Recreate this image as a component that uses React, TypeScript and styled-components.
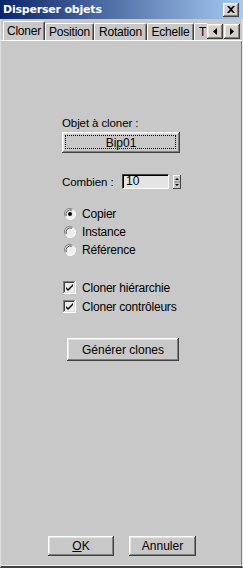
import React, { useState } from "react";
import styled, { createGlobalStyle } from "styled-components";

const GlobalStyle = createGlobalStyle`
   html, body {
      margin: 0;
      padding: 0;
      background: #c8c8c8;
   }
   body {
      font-family: "Liberation Sans", Arial, sans-serif;
      font-size: 11px;
      color: #000;
   }
`;

const bevelOut = `
   box-shadow: inset -1px -1px #404040, inset 1px 1px #ffffff, inset -2px -2px #808080, inset 2px 2px #e4e4e4;
`;

const Window = styled.div`
   width: 243px;
   height: 568px;
   box-sizing: border-box;
   display: flex;
   flex-direction: column;
   background: #c8c8c8;
   border-left: 1px solid #dedede;
   border-right: 1px solid #e6e6e6;
   border-bottom: 2px solid #404040;
`;

const TitleBar = styled.div`
   height: 19px;
   margin-left: -1px;
   margin-right: -1px;
   flex-shrink: 0;
   display: flex;
   align-items: center;
   justify-content: space-between;
   padding: 0 4px 0 3px;
   background: linear-gradient(to right, #0a246a, #a6caf0);
`;

const Title = styled.span`
   color: #fff;
   font-family: "DejaVu Sans", "Liberation Sans", sans-serif;
   font-weight: bold;
   font-size: 11px;
   letter-spacing: -0.2px;
`;

const CloseButton = styled.div`
   width: 16px;
   height: 14px;
   background: #d4d0c8;
   ${bevelOut}
   display: flex;
   align-items: center;
   justify-content: center;
`;

const TabArea = styled.div`
   position: relative;
   margin-top: 2px;
   flex-shrink: 0;
`;

const TabStrip = styled.div`
   height: 19px;
   display: flex;
   align-items: flex-end;
   padding-left: 2px;
   border-bottom: 1px solid #ffffff;
   overflow: hidden;
`;

const Tab = styled.div<{ $active?: boolean; $w: number; $cut?: boolean }>`
   position: relative;
   z-index: ${(p) => (p.$active ? 2 : 1)};
   box-sizing: border-box;
   width: ${(p) => p.$w}px;
   height: ${(p) => (p.$active ? 20 : 17)}px;
   margin-bottom: ${(p) => (p.$active ? -1 : 0)}px;
   flex-shrink: 0;
   display: flex;
   align-items: center;
   justify-content: ${(p) => (p.$cut ? "flex-start" : "center")};
   padding-left: ${(p) => (p.$cut ? 4 : 0)}px;
   padding-bottom: ${(p) => (p.$active ? 2 : 0)}px;
   background: #c8c8c8;
   border-top: 1px solid #ffffff;
   border-left: 1px solid #ffffff;
   border-right: ${(p) => (p.$cut ? "none" : "1px solid #404040")};
   border-top-left-radius: 2px;
   border-top-right-radius: 2px;
   box-shadow: ${(p) => (p.$cut ? "none" : "inset -1px 0 #808080")};
   font-size: 12px;
   letter-spacing: -0.2px;
`;

const Scroller = styled.div`
   position: absolute;
   right: 2px;
   top: 3px;
   display: flex;
   gap: 1px;
   z-index: 3;
`;

const ArrowButton = styled.div`
   width: 16px;
   height: 15px;
   background: #d4d0c8;
   ${bevelOut}
   display: flex;
   align-items: center;
   justify-content: center;
`;

const Panel = styled.div`
   flex: 1;
   display: flex;
   flex-direction: column;
   border-right: 1px solid #808080;
   border-bottom: 1px solid #f0f0f0;
   padding: 76px 0 9px 61px;
`;

const Label = styled.div`
   line-height: 13px;
   font-size: 11.5px;
   letter-spacing: -0.1px;
`;

const Button = styled.div<{ $w: number; $h: number; $focus?: boolean }>`
   box-sizing: border-box;
   width: ${(p) => p.$w}px;
   height: ${(p) => p.$h}px;
   display: flex;
   align-items: center;
   justify-content: center;
   background: #c8c8c8;
   ${bevelOut}
   font-size: 12px;
   position: relative;
   &::after {
      content: "";
      display: ${(p) => (p.$focus ? "block" : "none")};
      position: absolute;
      inset: 3px 4px 4px 3px;
      border: 1px dotted #000;
   }
`;

const Field = styled.div`
   margin-top: 2px;
`;

const SpinRow = styled.div`
   display: flex;
   align-items: center;
   margin-top: 21px;
   height: 15px;
   font-size: 11.5px;
`;

const SpinLabel = styled.span`
   width: 60px;
   letter-spacing: -0.1px;
`;

const SpinInput = styled.div`
   box-sizing: border-box;
   width: 47px;
   height: 15px;
   background: #e4e4e4;
   border-top: 1px solid #404040;
   border-left: 1px solid #404040;
   border-right: 1px solid #ffffff;
   border-bottom: 1px solid #ffffff;
   box-shadow: inset 1px 1px #000;
   padding-left: 3px;
   font-size: 12px;
   line-height: 13px;
`;

const SpinButtons = styled.div`
   margin-left: 4px;
   width: 8px;
   height: 14px;
   display: flex;
   flex-direction: column;
   background: #c8c8c8;
   box-shadow: inset -1px -1px #404040, inset 1px 1px #ffffff;
`;

const Group = styled.div<{ $top: number; $row: number }>`
   margin-top: ${(p) => p.$top}px;
   display: flex;
   flex-direction: column;
   & > * {
      height: ${(p) => p.$row}px;
   }
`;

const Option = styled.div`
   display: flex;
   align-items: center;
   gap: 6px;
   font-size: 12px;
   letter-spacing: -0.2px;
`;

const GenerateButton = styled(Button)`
   margin-top: 22px;
   margin-left: 5px;
`;

const Footer = styled.div`
   margin-top: auto;
   margin-left: -14px;
   display: flex;
   gap: 15px;
`;

function Radio({ checked }: { checked?: boolean }) {
   return (
      <svg width="12" height="12" viewBox="0 0 12 12" style={{ marginLeft: 2 }}>
         <circle cx="6" cy="6" r="5.5" fill="#ededed" />
         <path d="M1.2 8.5 A5.3 5.3 0 0 1 8.5 1.2" stroke="#808080" strokeWidth="1" fill="none" />
         <path d="M2.3 7.8 A4.2 4.2 0 0 1 7.8 2.3" stroke="#505050" strokeWidth="1" fill="none" />
         <path d="M3.5 10.8 A5.3 5.3 0 0 0 10.8 3.5" stroke="#ffffff" strokeWidth="1" fill="none" />
         {checked && <circle cx="6" cy="6" r="2" fill="#000" />}
      </svg>
   );
}

function Check() {
   return (
      <svg width="13" height="13" viewBox="0 0 13 13" style={{ marginLeft: 1 }}>
         <rect x="0" y="0" width="13" height="13" fill="#ffffff" />
         <rect x="0" y="0" width="12" height="12" fill="#808080" />
         <rect x="1" y="1" width="11" height="11" fill="#dcdcdc" />
         <rect x="1" y="1" width="10" height="10" fill="#404040" />
         <rect x="2" y="2" width="9" height="9" fill="#ececec" />
         <path d="M3 6 L5 8 L10 3 L10 5 L5 10 L3 8 Z" fill="#000" />
      </svg>
   );
}

const tabs = [
   { name: "Cloner", w: 42 },
   { name: "Position", w: 49 },
   { name: "Rotation", w: 53 },
   { name: "Echelle", w: 47 },
   { name: "T", w: 14, cut: true },
];

export default function App() {
   const [active, setActive] = useState("Cloner");
   return (
      <>
         <GlobalStyle />
         <Window>
            <TitleBar>
               <Title>Disperser objets</Title>
               <CloseButton>
                  <svg width="8" height="7" viewBox="0 0 8 7">
                     <path d="M0 0 L2 0 L4 2 L6 0 L8 0 L5 3.5 L8 7 L6 7 L4 5 L2 7 L0 7 L3 3.5 Z" fill="#000" />
                  </svg>
               </CloseButton>
            </TitleBar>
            <TabArea>
               <TabStrip>
                  {tabs.map((t) => (
                     <Tab
                        key={t.name}
                        $w={t.w}
                        $cut={t.cut}
                        $active={active == t.name}
                        onClick={() => setActive(t.name)}
                     >
                        {t.name}
                     </Tab>
                  ))}
               </TabStrip>
               <Scroller>
                  <ArrowButton>
                     <svg width="4" height="7" viewBox="0 0 4 7">
                        <path d="M4 0 L0 3.5 L4 7 Z" fill="#000" />
                     </svg>
                  </ArrowButton>
                  <ArrowButton>
                     <svg width="4" height="7" viewBox="0 0 4 7">
                        <path d="M0 0 L4 3.5 L0 7 Z" fill="#000" />
                     </svg>
                  </ArrowButton>
               </Scroller>
            </TabArea>
            <Panel>
               <Label>Objet à cloner :</Label>
               <Field>
                  <Button $w={118} $h={21} $focus>
                     Bip01
                  </Button>
               </Field>
               <SpinRow>
                  <SpinLabel>Combien :</SpinLabel>
                  <SpinInput>10</SpinInput>
                  <SpinButtons>
                     <svg width="8" height="14" viewBox="0 0 8 14">
                        <path d="M2 5 L4 3 L6 5 Z" fill="#000" />
                        <line x1="1" y1="7" x2="7" y2="7" stroke="#808080" />
                        <path d="M2 9 L6 9 L4 11 Z" fill="#000" />
                     </svg>
                  </SpinButtons>
               </SpinRow>
               <Group $top={16} $row={18}>
                  <Option>
                     <Radio checked /> Copier
                  </Option>
                  <Option>
                     <Radio /> Instance
                  </Option>
                  <Option>
                     <Radio /> Référence
                  </Option>
               </Group>
               <Group $top={19} $row={19}>
                  <Option>
                     <Check /> Cloner hiérarchie
                  </Option>
                  <Option>
                     <Check /> Cloner contrôleurs
                  </Option>
               </Group>
               <GenerateButton $w={112} $h={23}>
                  Générer clones
               </GenerateButton>
               <Footer>
                  <Button $w={66} $h={20}>
                     <span>
                        <u>O</u>K
                     </span>
                  </Button>
                  <Button $w={67} $h={20}>
                     Annuler
                  </Button>
               </Footer>
            </Panel>
         </Window>
      </>
   );
}
